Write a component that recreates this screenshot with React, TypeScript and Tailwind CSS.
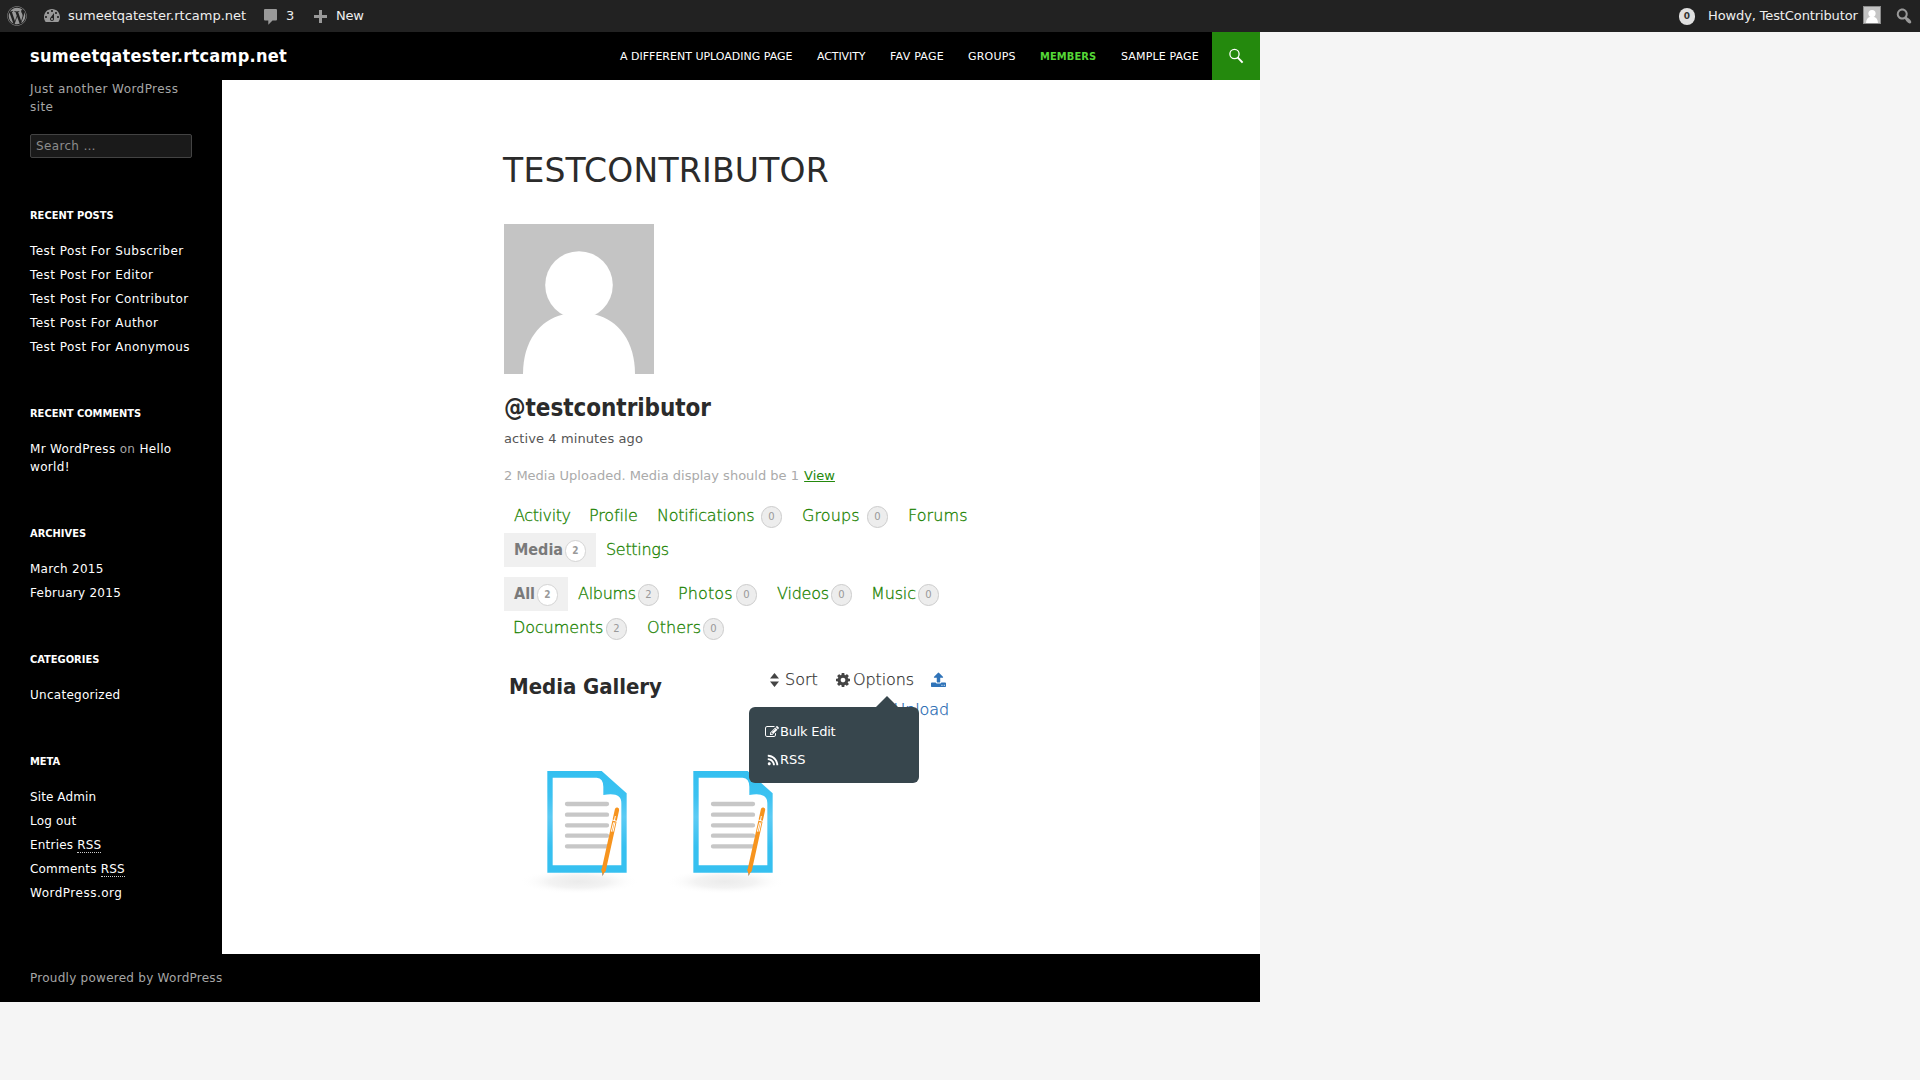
import type { ReactNode } from "react";
import { FaWordpress, FaRss } from "react-icons/fa";

const widgetLink = "text-white";

function Widget({ title, tracking, children }: { title: string; tracking: string; children: ReactNode }) {
  return (
    <section className="mb-12">
      <h2 className="mb-[17px] pt-px text-[11px] leading-[18px] font-bold text-white uppercase [font-stretch:condensed]">{title}</h2>
      <ul className={`flex flex-col gap-1.5 text-xs leading-[18px] ${tracking}`}>{children}</ul>
    </section>
  );
}

function Tab({
  label,
  count,
  width,
  active,
  tracking = "tracking-[-0.3px]",
}: {
  label: string;
  count?: number;
  width: string;
  active?: boolean;
  tracking?: string;
}) {
  return (
    <li
      className={`flex h-[34px] shrink-0 items-start px-2.5 ${width} ${
        active
          ? "bg-[#f0f0f0] font-bold text-[#7a7a7a] [font-stretch:condensed]"
          : "font-extralight text-[#1a8200] [-webkit-text-stroke:0.3px_#1a8200]"
      }`}
    >
      <span className={`mt-[5px] text-base leading-6 whitespace-nowrap ${active ? "" : tracking}`}>{label}</span>
      {count !== undefined && (
        <span
          className={`mt-[7px] ml-auto flex h-[22px] w-[21px] shrink-0 items-center justify-center rounded-full border text-[10px] leading-none text-[#999] [-webkit-text-stroke:0] ${
            active ? "border-[#d4d4d4] bg-white font-bold" : "border-[#ccc] bg-[#ededed] font-normal"
          }`}
        >
          {count}
        </span>
      )}
    </li>
  );
}

function Person({ className }: { className: string }) {
  return (
    <svg viewBox="0 0 150 150" className={className}>
      <rect width="150" height="150" fill="#c4c4c4" />
      <circle cx="75" cy="61" r="33.8" fill="#fff" />
      <path d="M19 150C19 117 36 96 59 90.5H91C114 96 131 117 131 150Z" fill="#fff" />
    </svg>
  );
}

function DocumentIcon({ id }: { id: string }) {
  return (
    <svg viewBox="-99 0 438 420" className="h-[140px] w-[146px] shrink-0">
      <defs>
        <radialGradient id={`${id}-shadow`}>
          <stop offset="0" stopColor="#ebebeb" />
          <stop offset="0.5" stopColor="#f3f3f3" />
          <stop offset="1" stopColor="#fff" stopOpacity="0" />
        </radialGradient>
        <linearGradient id={`${id}-blue`} x1="0" y1="0" x2="0" y2="1">
          <stop offset="0" stopColor="#33bff0" />
          <stop offset="0.25" stopColor="#3cc2f1" />
          <stop offset="0.45" stopColor="#5ccbf4" />
          <stop offset="0.75" stopColor="#36c0f0" />
          <stop offset="1" stopColor="#36c0f0" />
        </linearGradient>
      </defs>
      <ellipse cx="102" cy="350" rx="180" ry="38" fill={`url(#${id}-shadow)`} />
      <path d="M7 18H170L245 85V323H7Z" fill={`url(#${id}-blue)`} />
      <path d="M23 38H155Q175 40 175 65V90Q230 80 229 115V301H23Z" fill="#fff" />
      <g stroke="#c7c7c7" strokeWidth="13" strokeLinecap="round">
        <path d="M66 117H186M66 149H186M66 181H186M66 212H186M66 244H186" />
      </g>
      <path d="M216 134L176 316" stroke="#f7941e" strokeWidth="13" strokeLinecap="round" />
      <path d="M169 312L182 315L173 332Z" fill="#f7941e" />
      <path d="M172 325L176 326L172 334Z" fill="#999" />
      <path d="M211 153L208 168M199 164L219 170M206 172L199 200M210 172L204 200" stroke="#fff" strokeWidth="3" fill="none" />
    </svg>
  );
}

function AdminBar() {
  return (
    <header className="flex h-8 items-center bg-[#222] text-[13px] leading-8 text-[#eee]">
      <FaWordpress className="ml-[7px] size-5 shrink-0 text-[#999]" />
      <svg viewBox="0 0 20 20" className="ml-[15px] size-5 shrink-0" fill="#999">
        <path d="M3.76 16h12.48c1.1-1.37 1.76-3.11 1.76-5 0-4.42-3.58-8-8-8s-8 3.58-8 8c0 1.89.66 3.63 1.76 5zM10 4c.55 0 1 .45 1 1s-.45 1-1 1-1-.45-1-1 .45-1 1-1zM6 6c.55 0 1 .45 1 1s-.45 1-1 1-1-.45-1-1 .45-1 1-1zm8 0c.55 0 1 .45 1 1s-.45 1-1 1-1-.45-1-1 .45-1 1-1zm-5.37 5.55L12 7v6c0 1.1-.9 2-2 2s-2-.9-2-2c0-.57.24-1.08.63-1.45zM4 10c.55 0 1 .45 1 1s-.45 1-1 1-1-.45-1-1 .45-1 1-1zm12 0c.55 0 1 .45 1 1s-.45 1-1 1-1-.45-1-1 .45-1 1-1zm-5 3c0-.55-.45-1-1-1s-1 .45-1 1 .45 1 1 1 1-.45 1-1z" />
      </svg>
      <span className="ml-1.5 w-[196px]">sumeetqatester.rtcamp.net</span>
      <svg viewBox="0 0 13 16" className="mt-0.5 h-4 w-[13px] shrink-0" fill="#999">
        <path d="M1 0H12Q13 0 13 1V10.5Q13 11.5 12 11.5H8.5L4.3 15.8V11.5H1Q0 11.5 0 10.5V1Q0 0 1 0Z" />
      </svg>
      <span className="ml-[9px] w-[28px]">3</span>
      <svg viewBox="0 0 13 13" className="mt-px size-[13px] shrink-0" fill="#999">
        <path d="M5 0H8V5H13V8H8V13H5V8H0V5H5Z" />
      </svg>
      <span className="ml-[9px] tracking-[-0.2px]">New</span>
      <span className="mt-px ml-auto flex h-[17px] w-4 items-center justify-center rounded-full bg-[#e0e0e0] text-[9px] leading-none font-bold text-[#333]">0</span>
      <span className="ml-[13px] w-[155px] tracking-[-0.12px] whitespace-nowrap">Howdy, TestContributor</span>
      <span className="flex size-[18px] -translate-y-px border border-[#8c8c8c]">
        <Person className="size-4" />
      </span>
      <svg viewBox="0 0 20 20" className="mr-1.5 ml-[13px] size-5 shrink-0" fill="#999">
        <path d="M12.14 4.18c1.87 1.87 2.11 4.75.72 6.89.12.1.22.21.36.31.2.16.47.36.81.59.34.24.56.39.66.47.42.31.73.57.94.78.32.32.6.65.84 1 .25.35.44.69.59 1.04.14.35.21.68.18 1-.02.32-.14.59-.36.81s-.49.34-.81.36c-.31.02-.65-.04-.99-.19-.35-.14-.7-.34-1.04-.59-.35-.24-.68-.52-1-.84-.21-.21-.47-.52-.77-.93-.1-.13-.25-.35-.47-.66-.22-.32-.4-.57-.56-.78-.16-.2-.29-.35-.44-.5-2.07 1.09-4.69.76-6.44-.98-2.14-2.15-2.14-5.64 0-7.78 2.15-2.15 5.63-2.15 7.78 0zm-1.41 6.36c1.36-1.37 1.36-3.58 0-4.95-1.37-1.37-3.59-1.37-4.95 0-1.37 1.37-1.37 3.58 0 4.95 1.36 1.37 3.58 1.37 4.95 0z" />
      </svg>
    </header>
  );
}

function SiteHeader() {
  return (
    <div className="flex h-12 items-center bg-black pl-[30px]">
      <h1 className="text-lg leading-6 font-bold tracking-[0.28px] text-white [font-stretch:condensed]">sumeetqatester.rtcamp.net</h1>
      <nav className="ml-auto flex pt-0.5 text-[11px] leading-4 whitespace-nowrap text-white">
        <a className="w-[197px]">A DIFFERENT UPLOADING PAGE</a>
        <a className="w-[73px] tracking-[-0.1px]">ACTIVITY</a>
        <a className="w-[78px] tracking-[0.25px]">FAV PAGE</a>
        <a className="w-[72px] tracking-[0.2px]">GROUPS</a>
        <a className="w-[81px] font-bold tracking-[0.1px] text-[#55d737] [font-stretch:condensed]">MEMBERS</a>
        <a className="w-[91px] tracking-[0.15px]">SAMPLE PAGE</a>
      </nav>
      <div className="flex size-12 items-center justify-center bg-[#24890d]">
        <svg viewBox="0 0 16 16" className="size-4" fill="none" stroke="#fff">
          <circle cx="6.5" cy="6" r="4.6" strokeWidth="1.3" />
          <path d="M9.6 9.4L14.6 14.6" strokeWidth="2" />
        </svg>
      </div>
    </div>
  );
}

function Sidebar() {
  return (
    <aside className="w-[222px] shrink-0 bg-black pl-[30px] text-[#a6a6a6]">
      <p className="w-[162px] text-xs leading-[18px] tracking-[0.42px]">Just another WordPress site</p>
      <div className="mt-[18px] mb-12 flex h-6 w-[162px] items-center rounded-xs border border-[#434343] bg-[#1a1a1a] pl-[5px] text-xs tracking-[0.35px] text-[#8c8c8c]">
        Search …
      </div>
      <Widget title="Recent Posts" tracking="tracking-[0.45px]">
        {["Subscriber", "Editor", "Contributor", "Author", "Anonymous"].map((n) => (
          <li key={n} className={widgetLink}>Test Post For {n}</li>
        ))}
      </Widget>
      <Widget title="Recent Comments" tracking="tracking-[0.33px]">
        <li className="w-[162px]">
          <a className={widgetLink}>Mr WordPress</a> on <a className={widgetLink}>Hello world!</a>
        </li>
      </Widget>
      <Widget title="Archives" tracking="tracking-[0.27px]">
        <li className={widgetLink}>March 2015</li>
        <li className={widgetLink}>February 2015</li>
      </Widget>
      <Widget title="Categories" tracking="tracking-[0.27px]">
        <li className={widgetLink}>Uncategorized</li>
      </Widget>
      <Widget title="Meta" tracking="tracking-[0.2px]">
        <li className={`${widgetLink} tracking-[0.1px]`}>Site Admin</li>
        <li className={widgetLink}>Log out</li>
        <li className={widgetLink}>
          Entries <abbr className="border-b border-dotted border-[#ccc] no-underline">RSS</abbr>
        </li>
        <li className={widgetLink}>
          Comments <abbr className="border-b border-dotted border-[#ccc] no-underline">RSS</abbr>
        </li>
        <li className={`${widgetLink} tracking-[0.5px]`}>WordPress.org</li>
      </Widget>
    </aside>
  );
}

function OptionsMenu() {
  return (
    <div className="absolute top-[28px] right-3 flex w-[170px] flex-col items-end">
      <svg viewBox="0 0 22 11" className="mr-[21px] h-[11px] w-[22px]">
        <path d="M0 11L11 0L22 11Z" fill="#37464d" />
      </svg>
      <div className="h-[76px] w-full rounded-md bg-[#37464d] pt-4 pl-4 text-[13px] leading-[18px] tracking-[-0.25px] text-white">
        <div className="flex items-center">
          <svg viewBox="0 0 1792 1792" className="mr-px size-[14px]" fill="currentColor">
            <path d="M888 1184l116-116-152-152-116 116v56h96v96h56zm440-720q-16-16-33 1l-350 350q-17 17-1 33t33-1l350-350q17-17 1-33zm80 594v190q0 119-84.5 203.5t-203.5 84.5h-832q-119 0-203.5-84.5t-84.5-203.5v-832q0-119 84.5-203.5t203.5-84.5h832q63 0 117 25 15 7 18 23 3 17-9 29l-49 49q-14 14-32 8-23-6-45-6h-832q-66 0-113 47t-47 113v832q0 66 47 113t113 47h832q66 0 113-47t47-113v-126q0-13 9-22l64-64q15-15 35-7t20 29zm-96-738l288 288-672 672h-288v-288zm444 132l-92 92-288-288 92-92q28-28 68-28t68 28l152 152q28 28 28 68t-28 68z" />
          </svg>
          Bulk Edit
        </div>
        <div className="mt-2.5 flex items-center">
          <FaRss className="mr-px ml-0.5 size-3" />
          <span className="tracking-normal">RSS</span>
        </div>
      </div>
    </div>
  );
}

function Gallery() {
  return (
    <section>
      <div className="flex h-[120px] items-start">
        <h2 className="mt-[29px] w-[266px] pl-[5px] text-[22px] leading-[26px] font-bold tracking-[-0.05px] text-[#2b2b2b] [font-stretch:condensed]">Media Gallery</h2>
        <div className="mt-[23px] flex w-[66px] items-center text-base leading-6 font-extralight text-[#333] [-webkit-text-stroke:0.25px_#333]">
          <svg viewBox="0 0 9 14" className="mr-1.5 h-[14px] w-[9px]" fill="#444">
            <path d="M0 5.5L4.5 0L9 5.5ZM0 8.5H9L4.5 14Z" />
          </svg>
          Sort
        </div>
        <div className="relative mt-[23px] flex w-[95px] items-center text-base leading-6 font-extralight tracking-[-0.1px] text-[#333]">
          <svg viewBox="128 128 1536 1536" className="mr-[3px] size-[14px] shrink-0" fill="#444">
            <path d="M1152 896q0-106-75-181t-181-75-181 75-75 181 75 181 181 75 181-75 75-181zm512-109v222q0 12-8 23t-20 13l-185 28q-19 54-39 91 35 50 107 138 10 12 10 25t-9 23q-27 37-99 108t-94 71q-12 0-26-9l-138-108q-44 23-91 38-16 136-29 186-7 28-36 28h-222q-14 0-24.5-8.5t-11.5-21.5l-28-184q-49-16-90-37l-141 107q-10 9-25 9-14 0-25-11-126-114-165-168-7-10-7-23 0-12 8-23 15-21 51-66.5t54-70.5q-27-50-41-99l-183-27q-13-2-21-12.5t-8-23.5v-222q0-12 8-23t19-13l186-28q14-46 39-92-40-57-107-138-10-12-10-24 0-10 9-23 26-36 98.5-107.5t94.5-71.5q13 0 26 10l138 107q44-23 91-38 16-136 29-186 7-28 36-28h222q14 0 24.5 8.5t11.5 21.5l28 184q49 16 90 37l142-107q9-9 24-9 13 0 25 10 129 119 165 170 7 8 7 22 0 12-8 23-15 21-51 66.5t-54 70.5q26 50 41 98l183 28q13 2 21 12.5t8 23.5z" />
          </svg>
          <span className="[-webkit-text-stroke:0.25px_#333]">Options</span>
          <div className="font-normal">
            <OptionsMenu />
          </div>
        </div>
        <div className="mt-[27px] flex w-[18px] flex-col items-end text-base leading-6 font-extralight tracking-[-0.1px] text-[#2468b2]">
          <svg viewBox="64 0 1664 1664" className="mr-[3px] size-[15px] text-[#2f73b8]" fill="currentColor">
            <path d="M1344 1472q0-26-19-45t-45-19-45 19-19 45 19 45 45 19 45-19 19-45zm256 0q0-26-19-45t-45-19-45 19-19 45 19 45 45 19 45-19 19-45zm128-224v320q0 40-28 68t-68 28h-1472q-40 0-68-28t-28-68v-320q0-40 28-68t68-28h427q21 56 70.5 92t110.5 36h256q61 0 110.5-36t70.5-92h427q40 0 68 28t28 68zm-325-648q-17 40-59 40h-256v448q0 26-19 45t-45 19h-256q-26 0-45-19t-19-45v-448h-256q-42 0-59-40-17-39 14-69l448-448q18-19 45-19t45 19l448 448q31 30 14 69z" />
          </svg>
          <span className="mt-[11px] [-webkit-text-stroke:0.25px_#2468b2]">Upload</span>
        </div>
      </div>
      <div className="flex pl-2">
        <DocumentIcon id="first" />
        <DocumentIcon id="second" />
      </div>
    </section>
  );
}

export default function App() {
  return (
    <div className="h-[1080px] w-[1920px] overflow-hidden bg-[#f5f5f5] font-['DejaVu_Sans',sans-serif]">
      <AdminBar />
      <div className="w-[1260px]">
        <SiteHeader />
        <div className="flex h-[874px] bg-white">
          <Sidebar />
          <main className="ml-[282px] w-[474px] pt-[73px]">
            <h1 className="-ml-px text-[33px] leading-9 tracking-[0.22px] text-[#2b2b2b]">TESTCONTRIBUTOR</h1>
            <Person className="mt-[35px] size-[150px]" />
            <h2 className="mt-5 text-2xl leading-7 font-bold tracking-[-0.05px] text-[#2b2b2b] [font-stretch:condensed]">@testcontributor</h2>
            <p className="mt-2 text-[13px] leading-[18px] tracking-[0.1px] text-[#555]">active 4 minutes ago</p>
            <p className="mt-[19px] text-[13px] leading-[18px] text-[#aaa]">
              2 Media Uploaded. Media display should be 1 <a className="ml-px text-[#24890d] underline">View</a>
            </p>
            <ul className="mt-[14px] flex w-[480px] flex-wrap">
              <Tab label="Activity" width="w-[75px]" tracking="tracking-[-0.4px]" />
              <Tab label="Profile" width="w-[68px]" tracking="tracking-[-0.15px]" />
              <Tab label="Notifications" count={0} width="w-[145px]" tracking="tracking-[-0.22px]" />
              <Tab label="Groups" count={0} width="w-[106px]" tracking="tracking-[0.1px]" />
              <Tab label="Forums" width="w-[84px]" tracking="tracking-[0.1px]" />
              <Tab label="Media" count={2} width="w-[92px]" active />
              <Tab label="Settings" width="w-[90px]" />
            </ul>
            <ul className="mt-2.5 flex w-[474px] flex-wrap">
              <Tab label="All" count={2} width="w-[64px]" active />
              <Tab label="Albums" count={2} width="w-[101px]" />
              <Tab label="Photos" count={0} width="w-[98px]" tracking="-ml-px tracking-[0.1px]" />
              <Tab label="Videos" count={0} width="w-[95px]" tracking="tracking-[-0.2px]" />
              <Tab label="Music" count={0} width="w-[87px]" tracking="-ml-px tracking-[-0.15px]" />
              <Tab label="Documents" count={2} width="w-[133px]" tracking="-ml-px tracking-[-0.1px]" />
              <Tab label="Others" count={0} width="w-[97px]" tracking="tracking-[0.05px]" />
            </ul>
            <Gallery />
          </main>
        </div>
        <footer className="flex h-12 items-center bg-black pl-[30px] text-xs tracking-[0.26px] text-[#a6a6a6]">Proudly powered by WordPress</footer>
      </div>
    </div>
  );
}
